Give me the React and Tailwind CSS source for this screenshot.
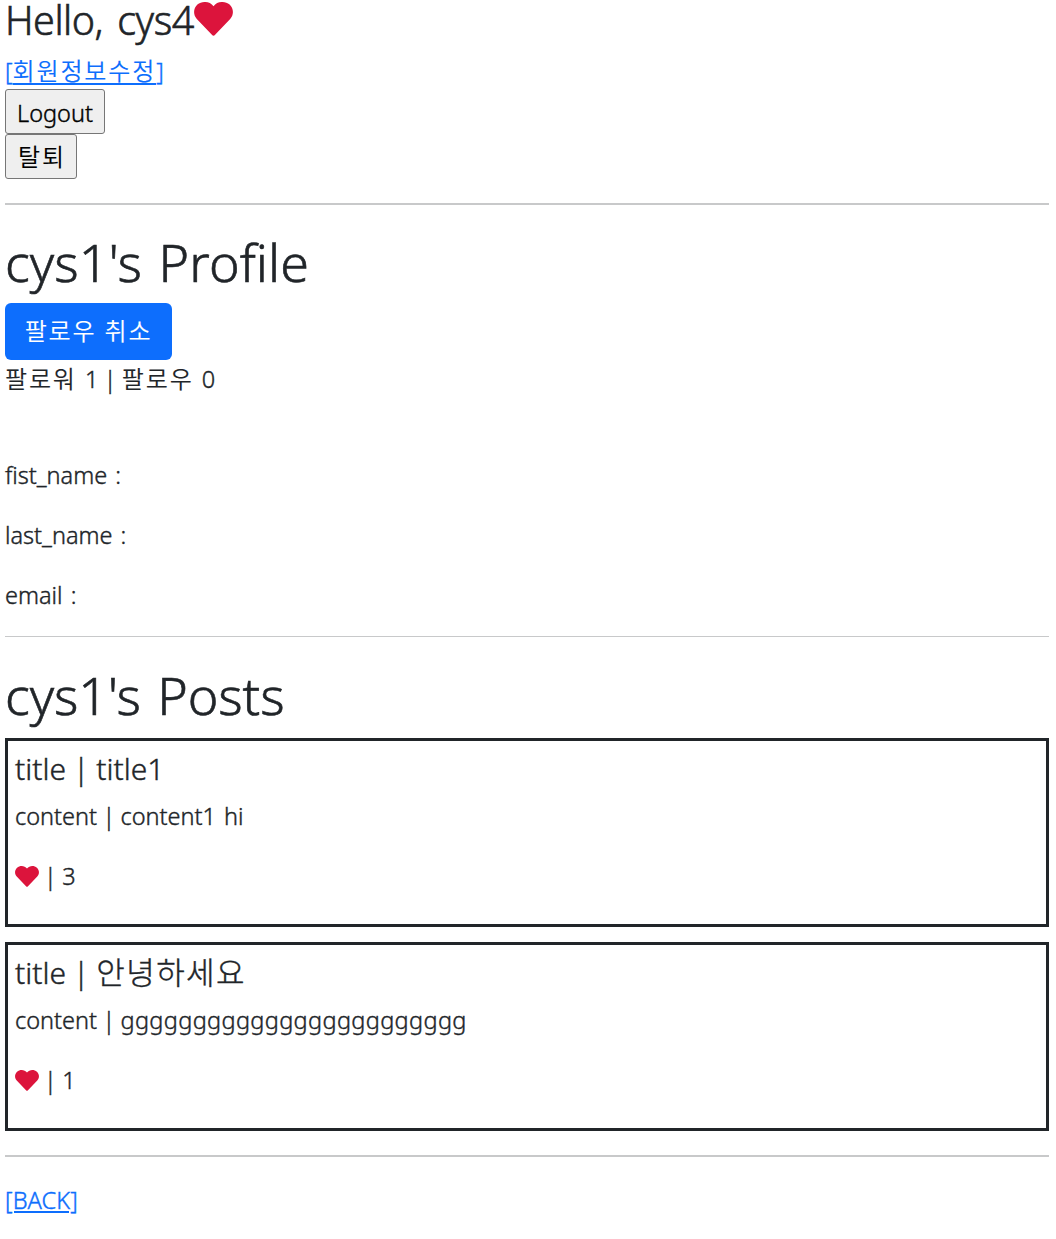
import React from "react";

const Heart = ({ className }) => (
  <svg viewBox="0 0 39 34" fill="#dc143c" stroke="none" className={className}>
    <path d="M19.5 4.2C15.8-1 8-1.2 3.4 2.6C-.8 6.4-1 13 2.8 17L17.9 32.7Q19.5 34.6 21.1 32.7L36.2 17C40 13 39.8 6.4 35.6 2.6C31-1.2 23.2-1 19.5 4.2Z" />
  </svg>
);

const Ko = ({ children }) => (
  <span className="text-[24px] leading-none font-[350] tracking-[1.85px] [-webkit-text-stroke:0.1px_currentColor]">{children}</span>
);

const Bar = () => <span className="[word-spacing:-0.75px]">{" | "}</span>;

function Field({ label }) {
  return <p className="mb-6 leading-9">{label} :</p>;
}

function Post({ title, content, likes }) {
  return (
    <article className="h-[189px] border-[3px] border-[#212529] pt-[10px] pl-[7px]">
      <h2 className="mb-[11px] text-[30px] leading-9">title<Bar />{title}</h2>
      <p className="mb-6 leading-9">content<Bar />{content}</p>
      <p className="flex h-9 items-center">
        <Heart className="mr-[5px] h-[21px] w-6" />
        <span className="leading-9"><Bar />{likes}</span>
      </p>
    </article>
  );
}

export default function App() {
  return (
    <main className="pr-[7px] pl-[5px] font-['Noto_Sans','Noto_Sans_CJK_KR',sans-serif] text-[23.5px] font-light text-[#212529] [word-spacing:2px] [-webkit-text-stroke:0.4px_currentColor]">
      <h3 className="flex h-[55px] items-start text-[39.5px] leading-10 tracking-[-0.5px] [word-spacing:4.5px] [-webkit-text-stroke:0.6px_currentColor]">
        <span>Hello, cys4</span>
        <Heart className="mt-[2px] h-[34px] w-[39px]" />
      </h3>
      <a href="#" className="block h-[34px] leading-[33px] text-[#0d6efd] underline decoration-2 underline-offset-3">
        [<Ko>회원정보수정</Ko>]
      </a>
      <button className="block h-[45px] w-[100px] rounded-[3px] border border-[#767676] bg-[#efefef] pt-[4px] text-black">Logout</button>
      <button className="block h-[45px] w-[72px] rounded-[3px] border border-[#767676] bg-[#efefef] pt-[3px] pl-[2px] text-black"><Ko>탈퇴</Ko></button>
      <hr className="mt-6 border-t-2 border-[#c8c9ca]" />
      <h1 className="mt-[26px] mb-[10px] text-[52px] leading-[62px] tracking-[0.1px] [word-spacing:3px] [-webkit-text-stroke:0.6px_currentColor]">cys1's Profile</h1>
      <button className="block h-[57px] w-[167px] rounded-md bg-[#0d6efd] text-white"><Ko>팔로우 취소</Ko></button>
      <p className="mb-[59px] leading-[38px]">
        <Ko>팔로워</Ko> 1<Bar /><Ko>팔로우</Ko> 0
      </p>
      <Field label="fist_name" />
      <Field label="last_name" />
      <Field label="email" />
      <hr className="-mt-px border-t border-[#c8c9ca]" />
      <h1 className="mt-[27px] mb-3 text-[52px] leading-[62px] tracking-[-0.1px] [word-spacing:3px] [-webkit-text-stroke:0.6px_currentColor]">cys1's Posts</h1>
      <div className="flex flex-col gap-[15px]">
        <Post title="title1" content="content1 hi" likes={3} />
        <Post
          title={<span className="text-[31px] leading-none tracking-[1.4px]">안녕하세요</span>}
          content={<span className="tracking-[0.35px]">gggggggggggggggggggggggg</span>}
          likes={1}
        />
      </div>
      <hr className="mt-6 border-t-2 border-[#c8c9ca]" />
      <a href="#" className="mt-[25px] block leading-9 tracking-[0.1px] text-[#0d6efd] underline decoration-2 underline-offset-2">[BACK]</a>
    </main>
  );
}
